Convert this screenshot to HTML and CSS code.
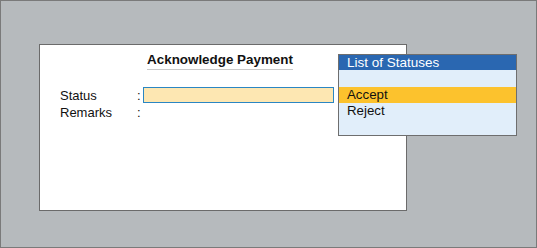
FILE: index.html
```html
<!DOCTYPE html>
<html lang="en">
<head>
    <meta charset="UTF-8">
    <title>Acknowledge Payment</title>
    <link rel="stylesheet" href="styles.css">
</head>
<body>
    <div class="screen">
        <div class="dialog">
            <div class="dialog-title"><span>Acknowledge Payment</span></div>
            <div class="field">
                <span class="field-label">Status</span>
                <span class="field-colon">:</span>
                <span class="field-input active"></span>
            </div>
            <div class="field">
                <span class="field-label">Remarks</span>
                <span class="field-colon">:</span>
                <span class="field-input"></span>
            </div>
        </div>

        <div class="picklist">
            <div class="picklist-head">List of Statuses</div>
            <div class="picklist-item blank"></div>
            <div class="picklist-item selected">Accept</div>
            <div class="picklist-item">Reject</div>
        </div>
    </div>
</body>
</html>
```

FILE: styles.css
```css
body {
    margin: 0;
    font-family: "Liberation Sans", Arial, sans-serif;
    font-size: 13px;
    color: #111;
}
.screen {
    position: relative;
    width: 537px;
    height: 248px;
    box-sizing: border-box;
    border: 1px solid #7a7a7a;
    background: #b6babd;
    padding: 43px 0 0 38px;
}
.dialog {
    width: 368px;
    height: 167px;
    box-sizing: border-box;
    border: 1px solid #6b6b6b;
    background: #fff;
    padding: 7px 0 0 20px;
}
.dialog-title {
    text-align: center;
    margin-left: -26px;
    margin-bottom: 17px;
}
.dialog-title span {
    display: inline-block;
    font-weight: bold;
    font-size: 13.4px;
    line-height: 15px;
    padding-bottom: 2px;
    border-bottom: 1px solid #c9c9c9;
}
.field {
    display: flex;
    align-items: center;
    height: 16px;
    margin-bottom: 1px;
}
.field-label {
    width: 77px;
}
.field-colon {
    width: 6px;
}
.field-input {
    width: 191px;
    height: 16px;
    box-sizing: border-box;
}
.field-input.active {
    background: #fde7b2;
    border: 1px solid #2a86c3;
}
.picklist {
    position: absolute;
    left: 337px;
    top: 53px;
    width: 179px;
    height: 82px;
    box-sizing: border-box;
    border: 1px solid #6e6e6e;
    background: #e1eefa;
}
.picklist-head {
    height: 15px;
    line-height: 15px;
    padding-left: 8px;
    background: #2a67b1;
    color: #fff;
    font-size: 13.5px;
}
.picklist-item {
    height: 16px;
    line-height: 16px;
    padding-left: 8px;
    font-size: 13.3px;
}
.picklist-item.blank {
    height: 17px;
}
.picklist-item.selected {
    background: #fcc22d;
}
```
